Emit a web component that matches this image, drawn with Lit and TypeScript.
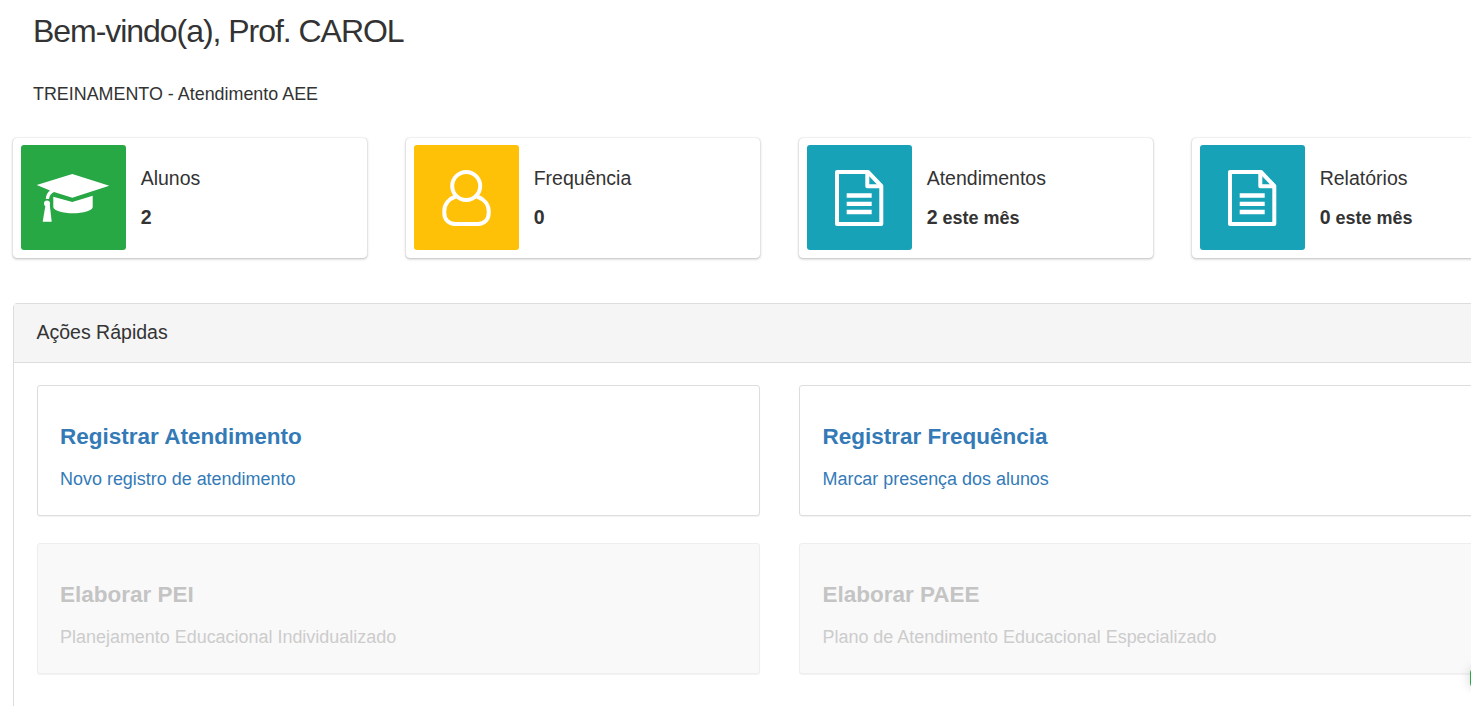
import { LitElement, html, css } from "lit";
import { customElement } from "lit/decorators.js";

const cap = html`<svg viewBox="0 0 105 105" width="105" height="105" fill="#fff">
  <path d="M15.7 40 51.3 29 88.3 40.7 51.3 52.7 33 47C30 48.500 28.500 50.500 28 54H24.800C25 50 26.500 47.200 29 45.400Z"/>
  <path d="M32.300 51.700 51.300 56.900 71.700 50.700V62C71.700 65.500 62 68.300 52 68.300S32.300 65.500 32.300 62Z"/>
  <circle cx="26" cy="58.500" r="3"/>
  <path d="M24.500 60 21.700 76.700H30.700L28.800 60Z"/>
</svg>`;
const person = html`<svg viewBox="0 0 105 105" width="105" height="105" fill="none" stroke="#fff" stroke-width="4">
  <circle cx="52.200" cy="41" r="14"/>
  <path d="M41.500 51.500C34.500 54 30.300 59.500 30.300 66V68C30.300 74.500 34.500 79 41 79H64C70.500 79 74.700 74.500 74.700 68V66C74.700 59.500 70 54 63 51.500"/>
</svg>`;
const doc = html`<svg viewBox="0 0 105 105" width="105" height="105" fill="none" stroke="#fff" stroke-width="4" stroke-linejoin="round">
  <path d="M30 27H61L74.300 41V79H30Z"/>
  <path d="M60.300 27V41.300H74.300"/>
  <path d="M39.700 50.500H64.700M39.700 58.900H64.700M39.700 67H64.700" stroke-width="4.300"/>
</svg>`;

@customElement("app-root")
export class AppRoot extends LitElement {
  static styles = css`
    :host {
      display: block;
      position: relative;
      height: 706px;
      overflow: hidden;
      background: #fff;
      color: #333;
      font-family: "Liberation Sans", Arial, sans-serif;
    }
    .shade { height: 0; box-shadow: 0 0 8px rgba(0, 0, 0, 0.12); }
    h1 {
      margin: 0;
      padding: 12px 0 0 33px;
      font-size: 32px;
      line-height: 38px;
      font-weight: 400;
      letter-spacing: -1.040px;
    }
    .sub {
      margin: 0;
      padding: 34px 0 0 33px;
      font-size: 17.9px;
      line-height: 21px;
    }
    .stats {
      display: flex;
      gap: 39px;
      padding: 33px 0 0 13px;
    }
    .stat {
      flex: none;
      box-sizing: border-box;
      width: 354px;
      height: 120px;
      display: flex;
      align-items: stretch;
      gap: 14.700px;
      padding: 7px 8px;
      background: #fff;
      border-radius: 4px;
      box-shadow: 0 0 1px rgba(0, 0, 0, 0.25), 0 1px 3px rgba(0, 0, 0, 0.25);
    }
    .ico {
      flex: none;
      width: 105px;
      height: 105px;
      border-radius: 3px;
    }
    .ico svg { display: block; }
    .green { background: #28a745; }
    .yellow { background: #ffc107; }
    .teal { background: #17a2b8; }
    .info { padding-top: 23px; font-size: 19.5px; line-height: 21px; }
    .info b { display: block; margin-top: 18px; font-size: 19.5px; }
    .info small { font-size: 18px; }
    .panel {
      box-sizing: border-box;
      width: 1560px;
      margin: 45px 0 0 13px;
      border: 1px solid #ddd;
      border-radius: 4px;
    }
    .head {
      height: 59px;
      box-sizing: border-box;
      padding: 18px 22.500px 0;
      background: #f5f5f5;
      border-bottom: 1px solid #ddd;
      font-size: 19.5px;
      line-height: 21px;
    }
    .grid {
      display: grid;
      grid-template-columns: 723px 723px;
      column-gap: 39.450px;
      row-gap: 27px;
      padding: 22px 23px 60px;
    }
    .act {
      box-sizing: border-box;
      height: 131px;
      padding: 38px 22.050px 0;
      background: #fff;
      border: 1px solid #ddd;
      border-radius: 3px;
      box-shadow: 0 1px 1px rgba(0, 0, 0, 0.05);
      color: #337ab7;
    }
    .act h4 {
      margin: 0;
      font-size: 22.5px;
      line-height: 26px;
      font-weight: 700;
    }
    .act p {
      margin: 19px 0 0;
      font-size: 17.95px;
      line-height: 21px;
    }
    .off { background: #f9f9f9; border-color: #eee; color: #c4c4c4; }
    .off p { color: #ccc; }
    .float {
      position: absolute;
      left: 1470px;
      top: 669px;
      width: 40px;
      height: 18px;
      border-radius: 4px;
      background: #28a745;
      box-shadow: 0 0 12px rgba(0, 0, 0, 0.18);
    }
  `;

  render() {
    const stats = [
      ["green", cap, "Alunos", "2", ""],
      ["yellow", person, "Frequência", "0", ""],
      ["teal", doc, "Atendimentos", "2", " este mês"],
      ["teal", doc, "Relatórios", "0", " este mês"],
    ] as const;
    const acts = [
      ["Registrar Atendimento", "Novo registro de atendimento", false],
      ["Registrar Frequência", "Marcar presença dos alunos", false],
      ["Elaborar PEI", "Planejamento Educacional Individualizado", true],
      ["Elaborar PAEE", "Plano de Atendimento Educacional Especializado", true],
    ] as const;
    return html`
      <div class="shade"></div>
      <h1>Bem-vindo(a), Prof. CAROL</h1>
      <p class="sub">TREINAMENTO - Atendimento AEE</p>
      <div class="stats">
        ${stats.map(
          ([c, icon, label, val, rest]) => html`<div class="stat">
            <div class="ico ${c}">${icon}</div>
            <div class="info">${label}<b>${val}<small>${rest}</small></b></div>
          </div>`
        )}
      </div>
      <section class="panel">
        <div class="head">Ações Rápidas</div>
        <div class="grid">
          ${acts.map(
            ([t, d, off]) => html`<div class="act ${off ? "off" : ""}">
              <h4>${t}</h4>
              <p>${d}</p>
            </div>`
          )}
        </div>
      </section>
      <div class="float"></div>
    `;
  }
}
